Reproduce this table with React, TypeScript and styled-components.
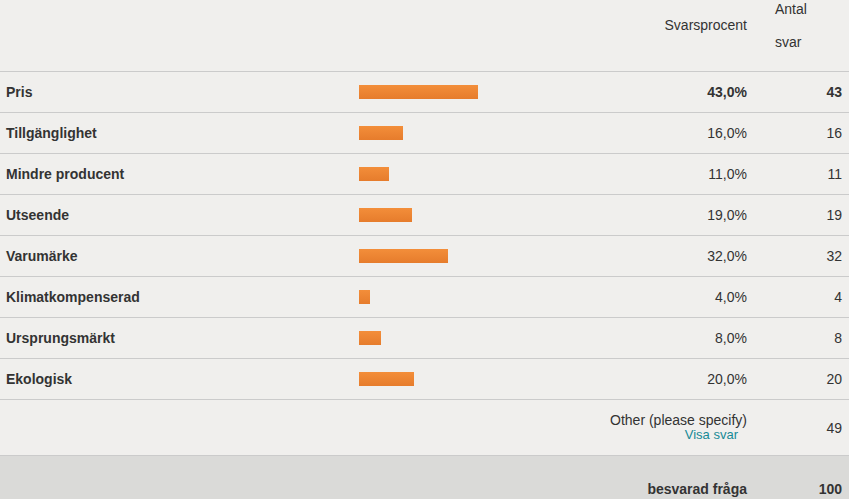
import React from "react";
import styled, { createGlobalStyle } from "styled-components";

const Global = createGlobalStyle`
  html, body { margin: 0; padding: 0; background: #f0efed; }
  body { font-family: "Liberation Sans", Arial, Helvetica, sans-serif; color: #333; }
`;

const Table = styled.div`
  width: 849px;
  display: flex;
  flex-direction: column;
  font-size: 14px;
`;

const cols = "352px 248px 155px 94px";

const Header = styled.div`
  display: grid;
  grid-template-columns: ${cols};
  grid-template-rows: 71px;
  height: 72px;
  box-sizing: border-box;
  align-items: start;
  border-bottom: 1px solid #cbcbcb;
  overflow: hidden;
`;

const HeadPct = styled.div`
  grid-column: 3;
  text-align: right;
  padding-right: 8px;
  padding-top: 17px;
  line-height: 16px;
`;

const HeadCount = styled.div`
  grid-column: 4;
  padding-left: 20px;
  line-height: 33px;
  margin-top: -7px;
  width: 40px;
`;

const Row = styled.div<{ $h?: number }>`
  display: grid;
  grid-template-columns: ${cols};
  height: ${(p) => p.$h ?? 40}px;
  align-items: center;
  border-bottom: 1px solid #cbcbcb;
`;

const Label = styled.div`
  padding-left: 6px;
  font-weight: bold;
`;

const BarCell = styled.div`
  padding-left: 7px;
  display: flex;
  align-items: center;
`;

const Bar = styled.div`
  height: 14px;
  background: linear-gradient(#f38e3a, #e67c2c);
`;

const Pct = styled.div<{ $bold?: boolean }>`
  text-align: right;
  padding-right: 8px;
  font-weight: ${(p) => (p.$bold ? "bold" : "normal")};
`;

const Count = styled.div<{ $bold?: boolean }>`
  text-align: right;
  padding-right: 7px;
  font-weight: ${(p) => (p.$bold ? "bold" : "normal")};
`;

const OtherCell = styled.div`
  grid-column: 3;
  display: flex;
  flex-direction: column;
  align-items: flex-end;
  padding-right: 8px;
  line-height: 15px;
`;

const OtherText = styled.span`
  white-space: nowrap;
`;

const Link = styled.a`
  color: #178a96;
  font-size: 13px;
  line-height: 14px;
  text-decoration: none;
  padding-right: 9px;
  cursor: pointer;
`;

const Footer = styled.div`
  display: grid;
  grid-template-columns: ${cols};
  background: #dadad8;
  min-height: 60px;
  padding-top: 25px;
  box-sizing: border-box;
  line-height: 16px;
  align-items: start;
`;

const FooterLabel = styled(Pct)`
  grid-column: 3;
`;

const data: [string, number, number][] = [
  ["Pris", 43, 43],
  ["Tillgänglighet", 16, 16],
  ["Mindre producent", 11, 11],
  ["Utseende", 19, 19],
  ["Varumärke", 32, 32],
  ["Klimatkompenserad", 4, 4],
  ["Ursprungsmärkt", 8, 8],
  ["Ekologisk", 20, 20],
];

export default function App() {
  return (
    <>
      <Global />
      <Table>
        <Header>
          <HeadPct>Svarsprocent</HeadPct>
          <HeadCount>Antal svar</HeadCount>
        </Header>
        {data.map(([label, pct, n], i) => (
          <Row key={label}>
            <Label>{label}</Label>
            <BarCell>
              <Bar style={{ width: Math.round(pct * 2.77) }} />
            </BarCell>
            <Pct $bold={i === 0}>{pct.toFixed(1).replace(".", ",")}%</Pct>
            <Count $bold={i === 0}>{n}</Count>
          </Row>
        ))}
        <Row $h={55}>
          <OtherCell>
            <OtherText>Other (please specify)</OtherText>
            <Link>Visa svar</Link>
          </OtherCell>
          <Count>49</Count>
        </Row>
        <Footer>
          <FooterLabel $bold>besvarad fråga</FooterLabel>
          <Count $bold>100</Count>
        </Footer>
      </Table>
    </>
  );
}
